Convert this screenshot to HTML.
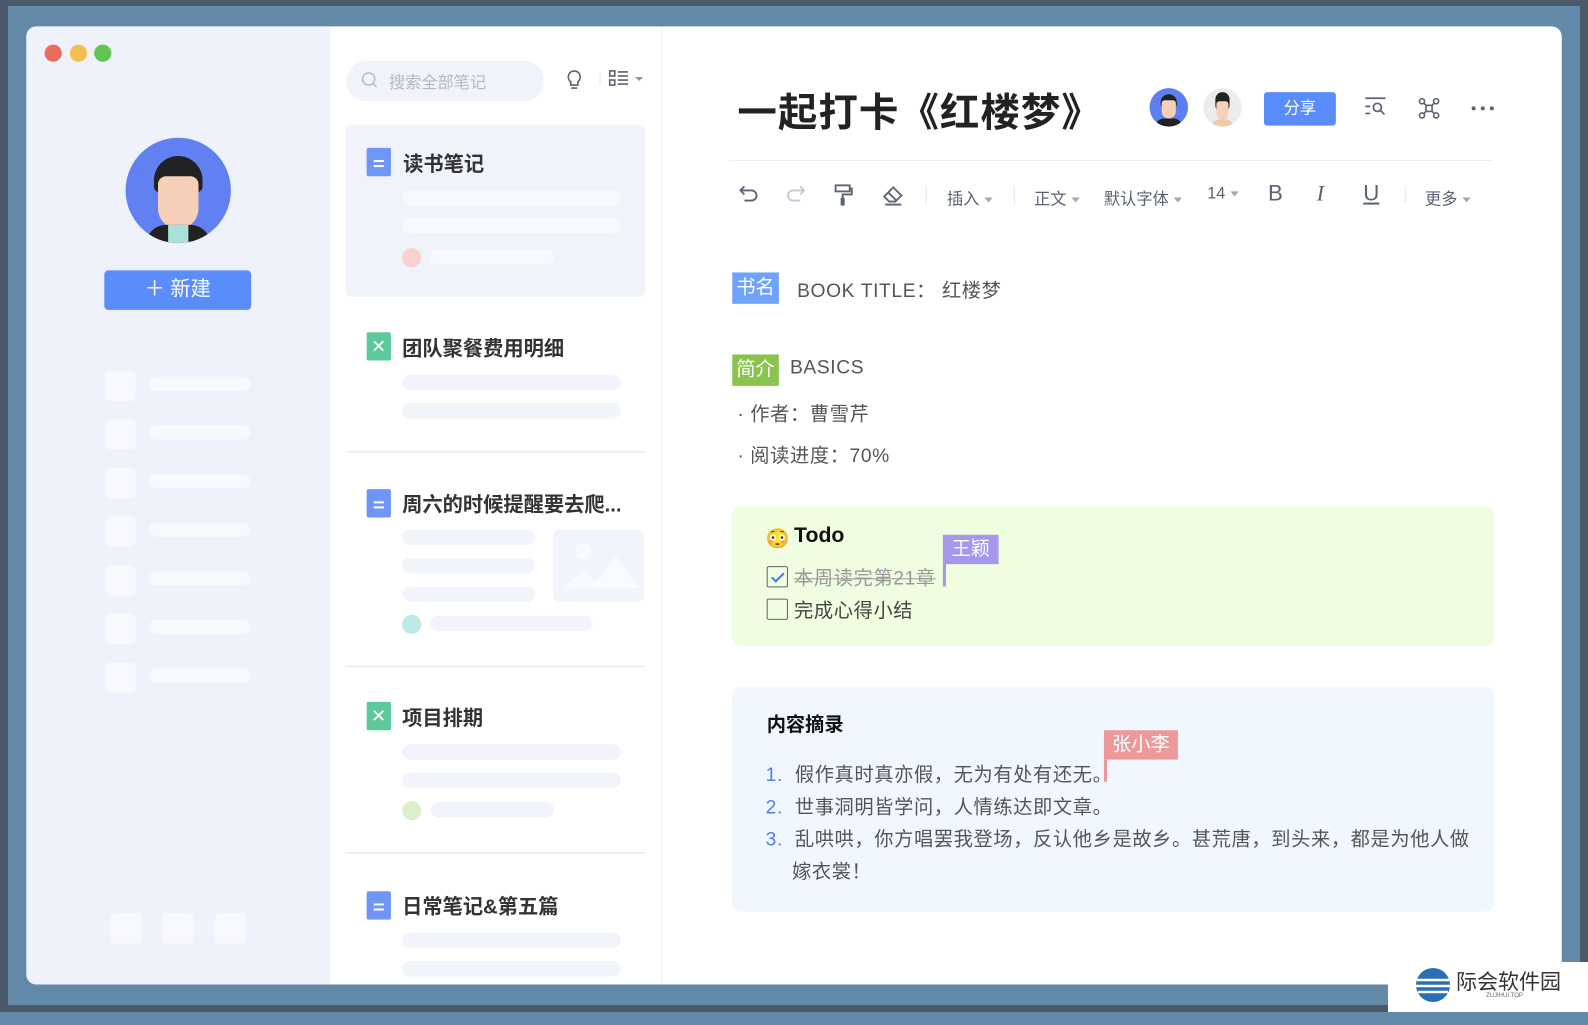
<!DOCTYPE html>
<html><head><meta charset="utf-8"><style>
*{margin:0;padding:0;box-sizing:border-box}
body{width:1588px;height:1012px;position:relative;overflow:hidden;background:#6389a9;font-family:"Liberation Sans","Noto Sans CJK SC",sans-serif;}
.wrap{position:absolute;left:0;top:0;width:1588px;height:1012px;transform:scale(1.0128);transform-origin:0 0}
.a{position:absolute}
.win{left:26px;top:26px;width:1516px;height:946px;background:#fff;border-radius:10px;overflow:hidden}
.side{left:0;top:0;width:300px;height:946px;background:#eff2fb}
.bar{background:#f8f9fd;border-radius:8px}
.sq{background:#f8f9fd;border-radius:5px}
.gl{background:#f1f4fa;border-radius:8px}
.t{color:#333;font-size:20px;font-weight:bold}
.doc{width:24px;height:28px;background:#6f95f7;border-radius:2px}
.doc:after{content:"";position:absolute;left:7px;top:12px;width:10px;height:2px;background:#fff;box-shadow:0 5px 0 #fff;}
.xl{width:24px;height:28px;background:#5cc99a;border-radius:2px;color:#fff;font-size:18px;text-align:center;line-height:28px}
.tb{color:#5b6273;font-size:16px}
.car{display:inline-block;width:0;height:0;border-left:4px solid transparent;border-right:4px solid transparent;border-top:5px solid #a0a6b2;vertical-align:middle;margin-left:5px}
.p{font-size:19px;color:#555;letter-spacing:0.6px}
</style></head><body>
<div class="a" style="left:0;top:0;width:1588px;height:6px;background:#4a5a6a"></div>
<div class="a" style="left:0;top:0;width:8px;height:1012px;background:#4a5a6a"></div>
<div class="a" style="left:0;top:1005px;width:1588px;height:7px;background:#4a5a6a"></div>
<div class="a" style="left:1580px;top:0;width:8px;height:1012px;background:#4a5a6a"></div>
<div class="wrap">
<div class="a win">
 <div class="a side">
  <div class="a" style="left:18px;top:18px;width:17px;height:17px;border-radius:50%;background:#ec6a5e"></div>
  <div class="a" style="left:43px;top:18px;width:17px;height:17px;border-radius:50%;background:#f4bf4f"></div>
  <div class="a" style="left:67px;top:18px;width:17px;height:17px;border-radius:50%;background:#61c554"></div>
  <div class="a" style="left:98px;top:110px;width:104px;height:104px;border-radius:50%;background:#6180f2;overflow:hidden">
   <div class="a" style="left:28px;top:18px;width:48px;height:36px;background:#222;border-radius:24px 24px 6px 6px"></div>
   <div class="a" style="left:32px;top:38px;width:40px;height:52px;background:#f5cfb8;border-radius:8px 8px 20px 20px"></div>
   <div class="a" style="left:20px;top:86px;width:64px;height:30px;background:#222;border-radius:20px 20px 0 0"></div>
   <div class="a" style="left:42px;top:86px;width:20px;height:20px;background:#a9e0dc"></div>
  </div>
  <div class="a" style="left:77px;top:241px;width:145px;height:39px;background:#5b8cfc;border-radius:4px;color:#fff;font-size:20px;text-align:center;line-height:39px">＋ 新建</div>
  <div class="a sq" style="left:78px;top:340px;width:30px;height:30px"></div><div class="a bar" style="left:121px;top:346px;width:100px;height:14px"></div>
  <div class="a sq" style="left:78px;top:388px;width:30px;height:30px"></div><div class="a bar" style="left:121px;top:394px;width:100px;height:14px"></div>
  <div class="a sq" style="left:78px;top:436px;width:30px;height:30px"></div><div class="a bar" style="left:121px;top:442px;width:100px;height:14px"></div>
  <div class="a sq" style="left:78px;top:484px;width:30px;height:30px"></div><div class="a bar" style="left:121px;top:490px;width:100px;height:14px"></div>
  <div class="a sq" style="left:78px;top:532px;width:30px;height:30px"></div><div class="a bar" style="left:121px;top:538px;width:100px;height:14px"></div>
  <div class="a sq" style="left:78px;top:580px;width:30px;height:30px"></div><div class="a bar" style="left:121px;top:586px;width:100px;height:14px"></div>
  <div class="a sq" style="left:78px;top:628px;width:30px;height:30px"></div><div class="a bar" style="left:121px;top:634px;width:100px;height:14px"></div>
  <div class="a sq" style="left:83px;top:876px;width:31px;height:30px"></div>
  <div class="a sq" style="left:134px;top:876px;width:31px;height:30px"></div>
  <div class="a sq" style="left:186px;top:876px;width:31px;height:30px"></div>
 </div>
 <div class="a" style="left:627px;top:0;width:1px;height:946px;background:#eef0f6"></div>
 <div class="a" style="left:316px;top:34px;width:195px;height:40px;border-radius:20px;background:#f0f3fa"></div>
 <svg class="a" style="left:330px;top:44px" width="20" height="20"><circle cx="8" cy="8" r="6" fill="none" stroke="#b8bfcc" stroke-width="1.6"/><line x1="12.5" y1="12.5" x2="16" y2="16" stroke="#b8bfcc" stroke-width="1.6"/></svg>
 <div class="a" style="left:358px;top:42px;font-size:16px;color:#b3b8c4">搜索全部笔记</div>
 <svg class="a" style="left:531px;top:41px" width="20" height="24"><path d="M10 3a6 6 0 0 0-3.5 10.8V17h7v-3.2A6 6 0 0 0 10 3z" fill="none" stroke="#5b6273" stroke-width="1.6"/><line x1="7" y1="20" x2="13" y2="20" stroke="#5b6273" stroke-width="1.6"/></svg>
 <div class="a" style="left:566px;top:46px;width:1px;height:12px;background:#dde0e6"></div>
 <svg class="a" style="left:575px;top:43px" width="40" height="18"><rect x="1" y="1" width="5" height="5" fill="none" stroke="#5b6273" stroke-width="1.6"/><rect x="1" y="10" width="5" height="5" fill="none" stroke="#5b6273" stroke-width="1.6"/><path d="M9 2h10M9 6h10M9 10h10M9 14h10" stroke="#5b6273" stroke-width="1.6"/><path d="M26 7h8l-4 4z" fill="#8c92a0"/></svg>
 <div class="a" style="left:315px;top:97px;width:296px;height:170px;background:#f0f3fa;border-radius:6px"></div>
 <div class="a doc" style="left:336px;top:120px"></div><div class="a t" style="left:372px;top:120px">读书笔记</div>
 <div class="a bar" style="left:371px;top:162px;width:216px;height:15px"></div>
 <div class="a bar" style="left:371px;top:189px;width:216px;height:15px"></div>
 <div class="a" style="left:371px;top:219px;width:19px;height:19px;border-radius:50%;background:#fbd0d0"></div>
 <div class="a bar" style="left:399px;top:220px;width:122px;height:15px"></div>

 <div class="a xl" style="left:336px;top:302px">✕</div><div class="a t" style="left:371px;top:302px">团队聚餐费用明细</div>
 <div class="a gl" style="left:371px;top:344px;width:216px;height:15px"></div>
 <div class="a gl" style="left:371px;top:372px;width:216px;height:15px"></div>
 <div class="a" style="left:315px;top:419px;width:296px;height:2px;background:#eceef2"></div>

 <div class="a doc" style="left:336px;top:457px"></div><div class="a t" style="left:371px;top:456px">周六的时候提醒要去爬...</div>
 <div class="a gl" style="left:371px;top:497px;width:131px;height:15px"></div>
 <div class="a gl" style="left:371px;top:525px;width:131px;height:15px"></div>
 <div class="a gl" style="left:371px;top:553px;width:131px;height:15px"></div>
 <div class="a" style="left:520px;top:497px;width:90px;height:71px;background:#f1f4fa;border-radius:6px;overflow:hidden"><svg width="90" height="71"><circle cx="30" cy="21" r="8" fill="#fafbfd"/><path d="M10 58l20-18 12 12 20-26 24 32z" fill="#fafbfd"/></svg></div>
 <div class="a" style="left:371px;top:581px;width:19px;height:19px;border-radius:50%;background:#bfe9e8"></div>
 <div class="a gl" style="left:399px;top:582px;width:160px;height:15px"></div>
 <div class="a" style="left:315px;top:631px;width:296px;height:2px;background:#eceef2"></div>

 <div class="a xl" style="left:336px;top:667px">✕</div><div class="a t" style="left:371px;top:667px">项目排期</div>
 <div class="a gl" style="left:371px;top:709px;width:216px;height:15px"></div>
 <div class="a gl" style="left:371px;top:737px;width:216px;height:15px"></div>
 <div class="a" style="left:371px;top:765px;width:19px;height:19px;border-radius:50%;background:#dcefcb"></div>
 <div class="a gl" style="left:399px;top:766px;width:122px;height:15px"></div>
 <div class="a" style="left:315px;top:815px;width:296px;height:2px;background:#eceef2"></div>

 <div class="a doc" style="left:336px;top:854px"></div><div class="a t" style="left:371px;top:853px">日常笔记&amp;第五篇</div>
 <div class="a gl" style="left:371px;top:895px;width:216px;height:15px"></div>
 <div class="a gl" style="left:371px;top:923px;width:216px;height:15px"></div>

 <div class="a" style="left:702px;top:55px;font-size:39px;font-weight:bold;color:#222;letter-spacing:1px">一起打卡《红楼梦》</div>
 <div class="a" style="left:1109px;top:61px;width:38px;height:38px;border-radius:50%;background:#5b7ff0;overflow:hidden"><div class="a" style="left:11px;top:6px;width:16px;height:12px;background:#222;border-radius:8px 8px 2px 2px"></div><div class="a" style="left:12px;top:12px;width:14px;height:18px;background:#f5cfb8;border-radius:3px 3px 7px 7px"></div><div class="a" style="left:6px;top:30px;width:26px;height:10px;background:#222;border-radius:8px 8px 0 0"></div></div>
 <div class="a" style="left:1162px;top:61px;width:38px;height:38px;border-radius:50%;background:#ececec;overflow:hidden"><div class="a" style="left:12px;top:4px;width:14px;height:20px;background:#222;border-radius:7px"></div><div class="a" style="left:13px;top:13px;width:12px;height:18px;background:#f3d2bc;border-radius:3px 3px 6px 6px"></div><div class="a" style="left:8px;top:31px;width:22px;height:10px;background:#f0c9a8;border-radius:8px 8px 0 0"></div></div>
 <div class="a" style="left:1222px;top:65px;width:71px;height:33px;background:#5b8cfc;border-radius:3px;color:#fff;font-size:16px;text-align:center;line-height:33px">分享</div>
 <svg class="a" style="left:1320px;top:68px" width="24" height="22"><path d="M2 3h20M2 11h5M2 18h5" stroke="#5b6273" stroke-width="1.7"/><circle cx="14" cy="12" r="4" fill="none" stroke="#5b6273" stroke-width="1.7"/><line x1="17" y1="15" x2="21" y2="19" stroke="#5b6273" stroke-width="1.7"/></svg>
 <svg class="a" style="left:1374px;top:70px" width="22" height="22"><circle cx="4" cy="4" r="2.5" fill="none" stroke="#5b6273" stroke-width="1.6"/><circle cx="18" cy="4" r="2.5" fill="none" stroke="#5b6273" stroke-width="1.6"/><circle cx="4" cy="18" r="2.5" fill="none" stroke="#5b6273" stroke-width="1.6"/><circle cx="18" cy="18" r="2.5" fill="none" stroke="#5b6273" stroke-width="1.6"/><rect x="8" y="8" width="6" height="6" fill="none" stroke="#5b6273" stroke-width="1.6"/><path d="M6 6l2 2M16 6l-2 2M6 16l2-2M16 16l-2-2" stroke="#5b6273" stroke-width="1.6"/></svg>
 <svg class="a" style="left:1426px;top:78px" width="24" height="6"><circle cx="3" cy="3" r="2" fill="#5b6273"/><circle cx="12" cy="3" r="2" fill="#5b6273"/><circle cx="21" cy="3" r="2" fill="#5b6273"/></svg>
 <div class="a" style="left:694px;top:132px;width:754px;height:1px;background:#ebedf0"></div>
 <svg class="a" style="left:702px;top:156px" width="24" height="22"><path d="M4 6h10a5 5 0 0 1 0 10H7" fill="none" stroke="#5b6273" stroke-width="1.8"/><path d="M7 2L3 6l4 4" fill="none" stroke="#5b6273" stroke-width="1.8"/></svg>
 <svg class="a" style="left:749px;top:156px" width="24" height="22"><path d="M18 6H8a5 5 0 0 0 0 10h7" fill="none" stroke="#c2c8d4" stroke-width="1.8"/><path d="M15 2l4 4-4 4" fill="none" stroke="#c2c8d4" stroke-width="1.8"/></svg>
 <svg class="a" style="left:796px;top:155px" width="24" height="24"><rect x="3" y="2" width="14" height="6" fill="none" stroke="#5b6273" stroke-width="1.8"/><path d="M17 5h2v6h-9v3" fill="none" stroke="#5b6273" stroke-width="1.8"/><rect x="8" y="14" width="4" height="8" rx="1" fill="#5b6273"/></svg>
 <svg class="a" style="left:844px;top:156px" width="24" height="22"><path d="M12 3l8 8-6 6H8l-5-5z" fill="none" stroke="#5b6273" stroke-width="1.8"/><path d="M7 8l8 8" stroke="#5b6273" stroke-width="1.8"/><path d="M4 20h16" stroke="#5b6273" stroke-width="1.8"/></svg>
 <div class="a" style="left:888px;top:158px;width:1px;height:18px;background:#e3e6ea"></div>
 <div class="a tb" style="left:909px;top:157px">插入<span class="car"></span></div>
 <div class="a" style="left:975px;top:158px;width:1px;height:18px;background:#e3e6ea"></div>
 <div class="a tb" style="left:995px;top:157px">正文<span class="car"></span></div>
 <div class="a tb" style="left:1064px;top:157px">默认字体<span class="car"></span></div>
 <div class="a tb" style="left:1166px;top:157px">14<span class="car"></span></div>
 <div class="a" style="left:1226px;top:152px;font-size:22px;color:#5b6273">B</div>
 <div class="a" style="left:1274px;top:152px;font-size:22px;color:#5b6273;font-family:'Liberation Serif',serif;font-style:italic">I</div>
 <div class="a" style="left:1320px;top:152px;font-size:22px;color:#5b6273;text-decoration:underline">U</div>
 <div class="a" style="left:1361px;top:158px;width:1px;height:18px;background:#e3e6ea"></div>
 <div class="a tb" style="left:1381px;top:157px">更多<span class="car"></span></div>

 <div class="a" style="left:697px;top:243px;width:46px;height:31px;background:#6fa3fb;color:#fff;font-size:19px;line-height:31px;text-align:center">书名</div>
 <div class="a p" style="left:761px;top:246px">BOOK TITLE： 红楼梦</div>
 <div class="a" style="left:697px;top:324px;width:46px;height:31px;background:#8bc34f;color:#fff;font-size:19px;line-height:31px;text-align:center">简介</div>
 <div class="a p" style="left:754px;top:327px">BASICS</div>
 <div class="a p" style="left:702px;top:368px">· 作者：曹雪芹</div>
 <div class="a p" style="left:702px;top:409px">· 阅读进度：70%</div>

 <div class="a" style="left:697px;top:474px;width:752px;height:138px;background:#effde0;border-radius:8px"></div>
 <div class="a" style="left:730px;top:494px;font-size:19px">😳</div>
 <div class="a" style="left:758px;top:491px;font-size:21px;font-weight:bold;color:#111">Todo</div>
 <div class="a" style="left:731px;top:533px;width:21px;height:21px;border:1.5px solid #666;border-radius:2px"></div>
 <svg class="a" style="left:734px;top:536px" width="16" height="16"><path d="M2 8l4 4 8-8" fill="none" stroke="#3d7cf5" stroke-width="2"/></svg>
 <div class="a p" style="left:758px;top:530px;color:#999;text-decoration:line-through">本周读完第21章</div>
 <div class="a" style="left:905px;top:502px;width:55px;height:29px;background:#a797ea;color:#fff;font-size:19px;line-height:29px;text-align:center">王颖</div>
 <div class="a" style="left:905px;top:531px;width:3px;height:22px;background:#a797ea"></div>
 <div class="a" style="left:731px;top:565px;width:21px;height:21px;border:1.5px solid #666;border-radius:2px"></div>
 <div class="a p" style="left:758px;top:562px;color:#444">完成心得小结</div>

 <div class="a" style="left:697px;top:652px;width:752px;height:222px;background:#f1f7fe;border-radius:8px"></div>
 <div class="a" style="left:731px;top:675px;font-size:19px;font-weight:bold;color:#111">内容摘录</div>
 <div class="a" style="left:1064px;top:695px;width:73px;height:29px;background:#ee9999;color:#fff;font-size:19px;line-height:29px;text-align:center">张小李</div>
 <div class="a" style="left:1064px;top:724px;width:3px;height:22px;background:#ee9999"></div>
 <div class="a p" style="left:730px;top:724px"><span style="color:#4a80f0">1.</span>&nbsp; 假作真时真亦假，无为有处有还无。</div>
 <div class="a p" style="left:730px;top:756px"><span style="color:#4a80f0">2.</span>&nbsp; 世事洞明皆学问，人情练达即文章。</div>
 <div class="a p" style="left:730px;top:788px"><span style="color:#4a80f0">3.</span>&nbsp; 乱哄哄，你方唱罢我登场，反认他乡是故乡。甚荒唐，到头来，都是为他人做</div>
 <div class="a p" style="left:756px;top:820px">嫁衣裳！</div>
</div>
</div>
<div class="a" style="left:1388px;top:962px;width:200px;height:50px;background:#fff"></div>
<svg class="a" style="left:1414px;top:966px" width="38" height="38"><circle cx="19" cy="19" r="17" fill="#2a6fb6"/><path d="M3 14h32M2 20h34M4 26h30" stroke="#fff" stroke-width="2.5"/></svg>
<div class="a" style="left:1456px;top:966px;font-size:21px;color:#333">际会软件园</div>
<div class="a" style="left:1486px;top:993px;font-size:6px;color:#666">ZUJIHUI.TOP</div>
</body></html>
